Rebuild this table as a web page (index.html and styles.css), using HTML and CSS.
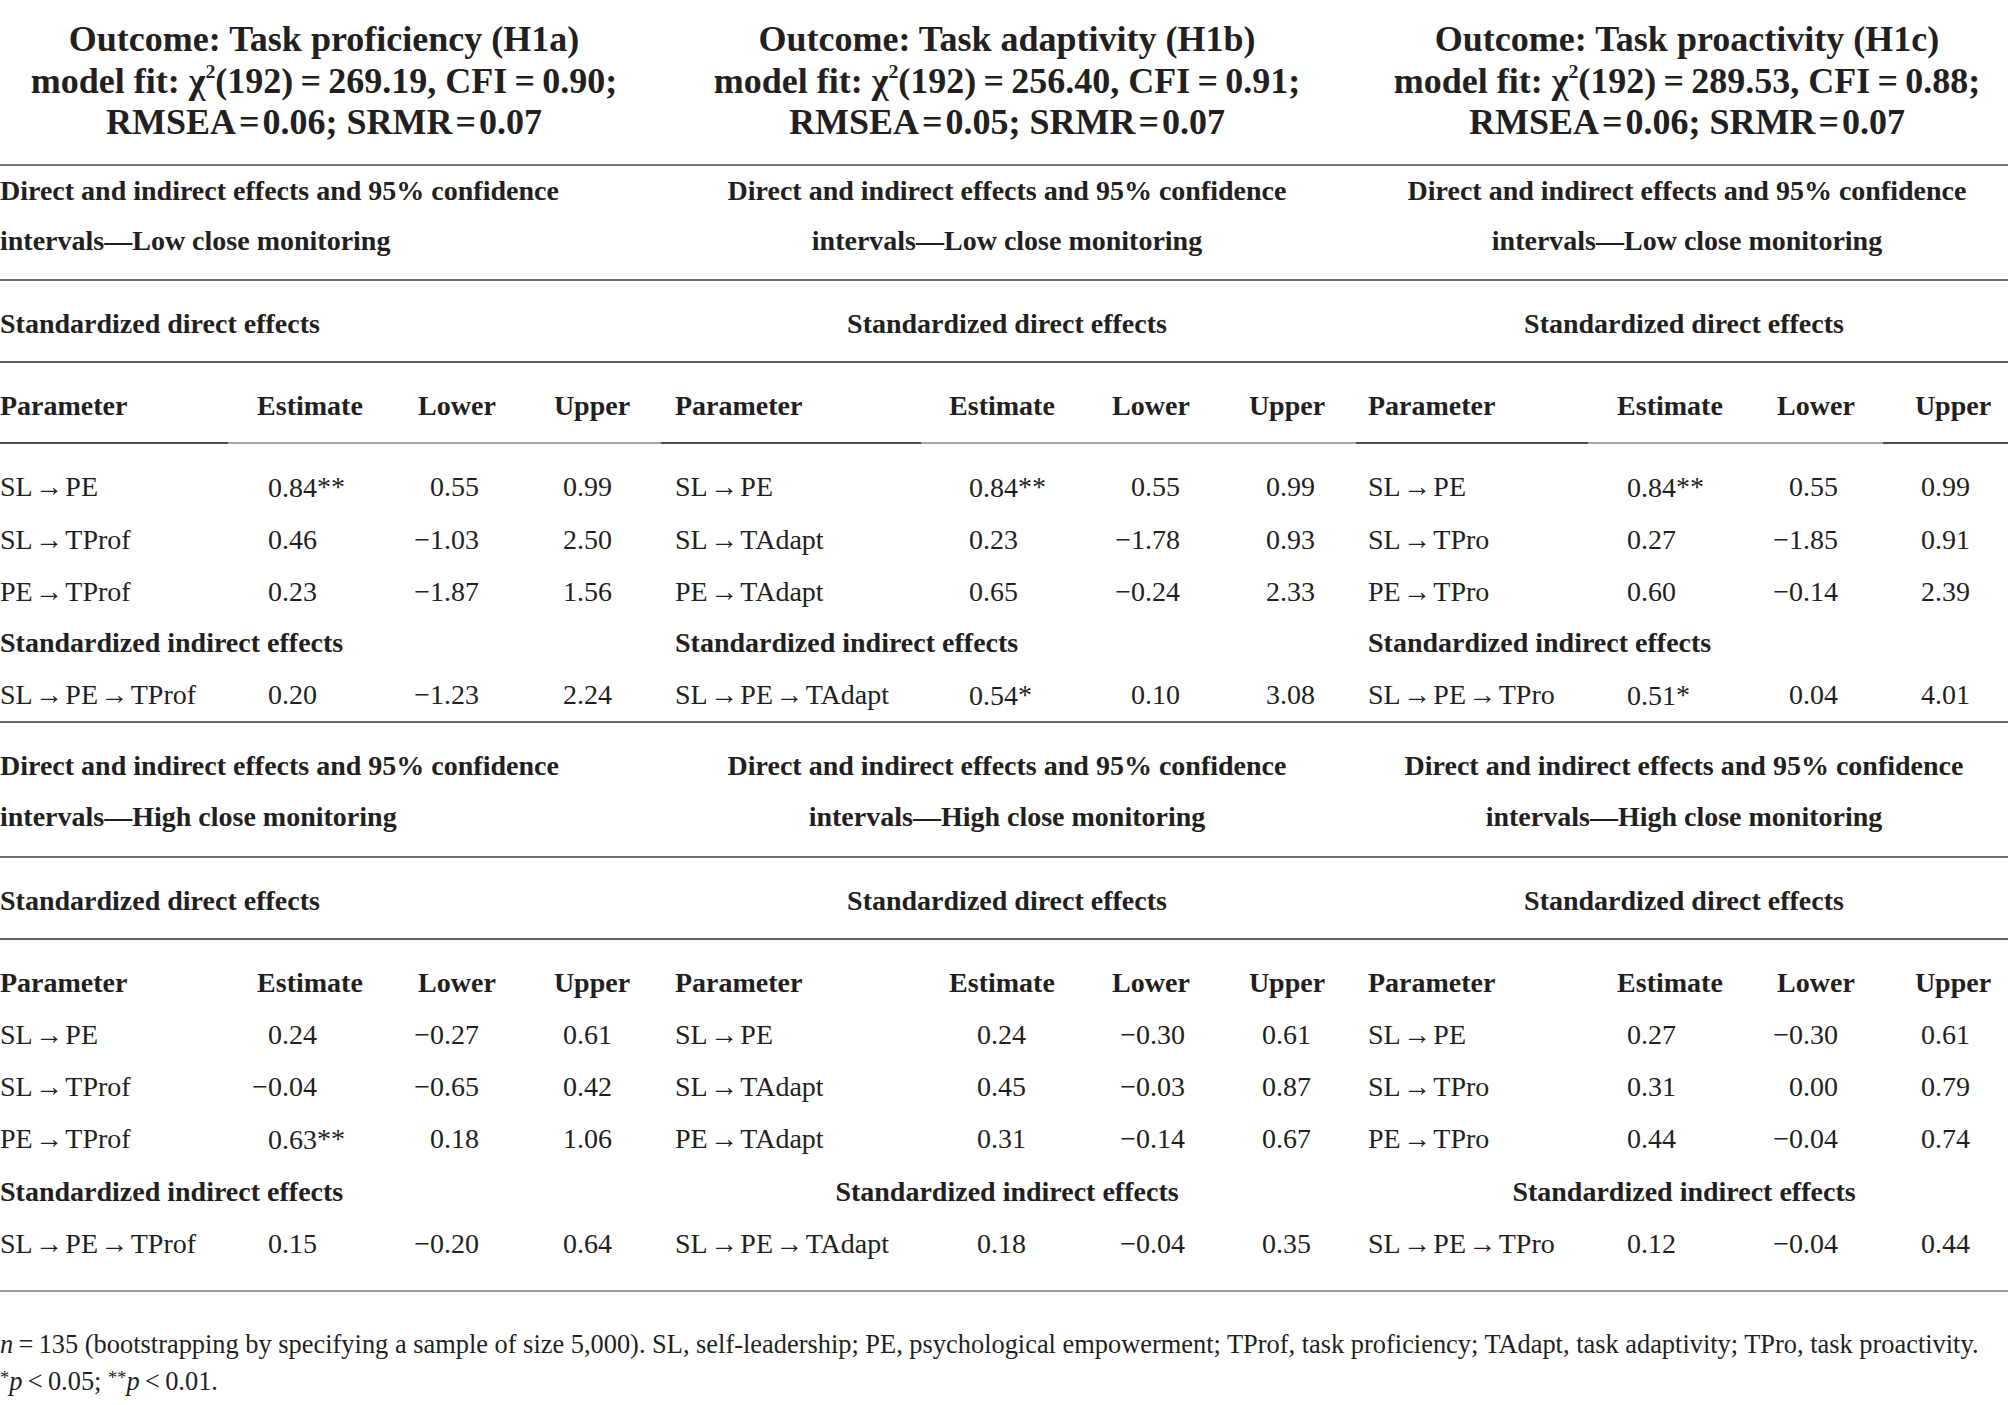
FILE: index.html
```html
<!DOCTYPE html>
<html lang="en">
<head>
<meta charset="utf-8">
<title>Direct and indirect effects</title>
<link rel="stylesheet" href="styles.css">
</head>
<body>
<div class="tbl">
  <div class="r title">
    <div class="g">Outcome: Task proficiency (H1a)<br>model fit: χ<span class="sup">2</span>(192)&#8201;=&#8201;269.19, CFI&#8201;=&#8201;0.90;<br>RMSEA&#8202;=&#8202;0.06; SRMR&#8202;=&#8202;0.07</div>
    <div class="g">Outcome: Task adaptivity (H1b)<br>model fit: χ<span class="sup">2</span>(192)&#8201;=&#8201;256.40, CFI&#8201;=&#8201;0.91;<br>RMSEA&#8202;=&#8202;0.05; SRMR&#8202;=&#8202;0.07</div>
    <div class="g">Outcome: Task proactivity (H1c)<br>model fit: χ<span class="sup">2</span>(192)&#8201;=&#8201;289.53, CFI&#8201;=&#8201;0.88;<br>RMSEA&#8202;=&#8202;0.06; SRMR&#8202;=&#8202;0.07</div>
  </div>

  <section class="half up">
    <div class="r sec">
      <div class="g left">Direct and indirect effects and 95% confidence<br>intervals—Low close monitoring</div>
      <div class="g">Direct and indirect effects and 95% confidence<br>intervals—Low close monitoring</div>
      <div class="g">Direct and indirect effects and 95% confidence<br>intervals—Low close monitoring</div>
    </div>
    <div class="r sub">
      <div class="g left">Standardized direct effects</div>
      <div class="g">Standardized direct effects</div>
      <div class="g g3">Standardized direct effects</div>
    </div>
    <div class="r hd">
      <div>Parameter</div><div>Estimate</div><div>Lower</div><div>Upper</div>
      <div>Parameter</div><div>Estimate</div><div>Lower</div><div>Upper</div>
      <div>Parameter</div><div>Estimate</div><div>Lower</div><div>Upper</div>
    </div>
    <div class="rows">
      <div class="r dr">
        <div>SL&#8202;→&#8202;PE</div><div>0.84<span class="st">**</span></div><div>0.55</div><div>0.99</div>
        <div>SL&#8202;→&#8202;PE</div><div>0.84<span class="st">**</span></div><div>0.55</div><div>0.99</div>
        <div>SL&#8202;→&#8202;PE</div><div>0.84<span class="st">**</span></div><div>0.55</div><div>0.99</div>
      </div>
      <div class="r dr">
        <div>SL&#8202;→&#8202;TProf</div><div>0.46</div><div>−1.03</div><div>2.50</div>
        <div>SL&#8202;→&#8202;TAdapt</div><div>0.23</div><div>−1.78</div><div>0.93</div>
        <div>SL&#8202;→&#8202;TPro</div><div>0.27</div><div>−1.85</div><div>0.91</div>
      </div>
      <div class="r dr">
        <div>PE&#8202;→&#8202;TProf</div><div>0.23</div><div>−1.87</div><div>1.56</div>
        <div>PE&#8202;→&#8202;TAdapt</div><div>0.65</div><div>−0.24</div><div>2.33</div>
        <div>PE&#8202;→&#8202;TPro</div><div>0.60</div><div>−0.14</div><div>2.39</div>
      </div>
      <div class="r ir">
        <div class="g left">Standardized indirect effects</div>
        <div class="g left g2">Standardized indirect effects</div>
        <div class="g left g3">Standardized indirect effects</div>
      </div>
      <div class="r dr">
        <div>SL&#8202;→&#8202;PE&#8202;→&#8202;TProf</div><div>0.20</div><div>−1.23</div><div>2.24</div>
        <div>SL&#8202;→&#8202;PE&#8202;→&#8202;TAdapt</div><div>0.54<span class="st">*</span></div><div>0.10</div><div>3.08</div>
        <div>SL&#8202;→&#8202;PE&#8202;→&#8202;TPro</div><div>0.51<span class="st">*</span></div><div>0.04</div><div>4.01</div>
      </div>
    </div>
  </section>

  <section class="half lo">
    <div class="r sec">
      <div class="g left">Direct and indirect effects and 95% confidence<br>intervals—High close monitoring</div>
      <div class="g">Direct and indirect effects and 95% confidence<br>intervals—High close monitoring</div>
      <div class="g g3">Direct and indirect effects and 95% confidence<br>intervals—High close monitoring</div>
    </div>
    <div class="r sub">
      <div class="g left">Standardized direct effects</div>
      <div class="g">Standardized direct effects</div>
      <div class="g g3">Standardized direct effects</div>
    </div>
    <div class="rows">
      <div class="r hd">
        <div>Parameter</div><div>Estimate</div><div>Lower</div><div>Upper</div>
        <div>Parameter</div><div>Estimate</div><div>Lower</div><div>Upper</div>
        <div>Parameter</div><div>Estimate</div><div>Lower</div><div>Upper</div>
      </div>
      <div class="r dr">
        <div>SL&#8202;→&#8202;PE</div><div>0.24</div><div>−0.27</div><div>0.61</div>
        <div>SL&#8202;→&#8202;PE</div><div>0.24</div><div>−0.30</div><div>0.61</div>
        <div>SL&#8202;→&#8202;PE</div><div>0.27</div><div>−0.30</div><div>0.61</div>
      </div>
      <div class="r dr">
        <div>SL&#8202;→&#8202;TProf</div><div>−0.04</div><div>−0.65</div><div>0.42</div>
        <div>SL&#8202;→&#8202;TAdapt</div><div>0.45</div><div>−0.03</div><div>0.87</div>
        <div>SL&#8202;→&#8202;TPro</div><div>0.31</div><div>0.00</div><div>0.79</div>
      </div>
      <div class="r dr">
        <div>PE&#8202;→&#8202;TProf</div><div>0.63<span class="st">**</span></div><div>0.18</div><div>1.06</div>
        <div>PE&#8202;→&#8202;TAdapt</div><div>0.31</div><div>−0.14</div><div>0.67</div>
        <div>PE&#8202;→&#8202;TPro</div><div>0.44</div><div>−0.04</div><div>0.74</div>
      </div>
      <div class="r ir">
        <div class="g left">Standardized indirect effects</div>
        <div class="g">Standardized indirect effects</div>
        <div class="g g3">Standardized indirect effects</div>
      </div>
      <div class="r dr">
        <div>SL&#8202;→&#8202;PE&#8202;→&#8202;TProf</div><div>0.15</div><div>−0.20</div><div>0.64</div>
        <div>SL&#8202;→&#8202;PE&#8202;→&#8202;TAdapt</div><div>0.18</div><div>−0.04</div><div>0.35</div>
        <div>SL&#8202;→&#8202;PE&#8202;→&#8202;TPro</div><div>0.12</div><div>−0.04</div><div>0.44</div>
      </div>
    </div>
  </section>

  <div class="note">
    <p><i>n</i>&#8201;=&#8201;135 (bootstrapping by specifying a sample of size 5,000). SL, self-leadership; PE, psychological empowerment; TProf, task proficiency; TAdapt, task adaptivity; TPro, task proactivity.</p>
    <p><span class="nsup">*</span><i>p</i>&#8201;&lt;&#8201;0.05; <span class="nsup">**</span><i>p</i>&#8201;&lt;&#8201;0.01.</p>
  </div>
</div>
</body>
</html>
```

FILE: styles.css
```css
html, body {
  margin: 0;
  padding: 0;
  background: #ffffff;
}

body {
  width: 2008px;
  color: #231f20;
  font-family: "Liberation Serif", "Times New Roman", serif;
  font-size: 28px;
}

.tbl {
  width: 2008px;
}

.r {
  display: grid;
  grid-template-columns: 250px 120px 174px 104px 252px 204px 94px 168px 194px 210px 92px 146px;
  white-space: nowrap;
}

.g {
  grid-column: span 4;
  text-align: center;
}

.g.left {
  text-align: left;
}

.g.g2.left {
  padding-left: 27px;
}

.g.g3.left {
  padding-left: 2px;
}

.g.g3 {
  padding-right: 6px;
}

/* title block */
.title {
  font-weight: 700;
  font-size: 36px;
  line-height: 41.5px;
  padding: 19px 0 20.5px;
  border-bottom: 2px solid #757575;
}

/* section labels */
.sec {
  font-weight: 700;
  border-bottom: 2px solid #6f6f6f;
}

.up .sec {
  line-height: 50px;
  padding-bottom: 13px;
}

.lo .sec {
  line-height: 51px;
  padding: 17px 0 14px;
}

.sub {
  font-weight: 700;
  line-height: 70px;
  padding: 7.5px 0 2.5px;
  border-bottom: 2px solid #5f5f5f;
}

/* column headers */
.hd {
  font-weight: 700;
  text-align: center;
}

.hd > :nth-child(4n + 1) {
  text-align: left;
}

.hd > :nth-child(4) { padding-right: 8px; }
.hd > :nth-child(5) { padding-left: 27px; }
.hd > :nth-child(8) { padding-left: 10px; }
.hd > :nth-child(9) { padding-left: 2px; }
.hd > :nth-child(10) { padding-left: 10px; }
.hd > :nth-child(12) { padding-left: 36px; }

.up .hd {
  line-height: 51.6px;
  padding: 17px 0 12.4px;
  background: linear-gradient(to right,
      #4d4d4d 0 228px, #a8a8a8 228px 661px,
      #4d4d4d 661px 921px, #a8a8a8 921px 1356px,
      #4d4d4d 1356px 1588px, #a8a8a8 1588px 1883px,
      #4d4d4d 1883px 2008px) left bottom / 100% 2px no-repeat;
}

.lo .hd {
  line-height: 52px;
  padding-top: 16.5px;
}

/* data rows */
.up .rows {
  padding-top: 17.5px;
  border-bottom: 2px solid #6a6a6a;
}

.up .rows .r {
  line-height: 51.6px;
}

.lo .rows {
  padding-bottom: 20px;
  border-bottom: 2px solid #9a9a9a;
}

.lo .rows .r {
  line-height: 52px;
}

.ir {
  font-weight: 700;
}

.dr > div {
  text-align: right;
}

.dr > :nth-child(4n + 1) {
  text-align: left;
}

.dr > :nth-child(5) { padding-left: 27px; }
.dr > :nth-child(9) { padding-left: 2px; }

.dr > :nth-child(2) { padding-right: 53px; }
.dr > :nth-child(3) { padding-right: 65px; }
.dr > :nth-child(4) { padding-right: 36px; }
.dr > :nth-child(10) { padding-right: 94px; }
.dr > :nth-child(11) { padding-right: 24px; }
.dr > :nth-child(12) { padding-right: 38px; }

.up .dr > :nth-child(6) { padding-right: 86px; }
.up .dr > :nth-child(7) { padding-right: 18px; }
.up .dr > :nth-child(8) { padding-right: 51px; }

.lo .dr > :nth-child(6) { padding-right: 78px; }
.lo .dr > :nth-child(7) { padding-right: 13px; }
.lo .dr > :nth-child(8) { padding-right: 55px; }

.st {
  display: inline-block;
  width: 0;
  text-align: left;
  vertical-align: 1px;
}

.sup {
  font-size: 0.55em;
  line-height: 0;
  vertical-align: 0.75em;
}

/* footnote */
.note {
  padding-top: 33.6px;
  font-size: 26.4px;
  line-height: 37px;
  white-space: nowrap;
}

.note p {
  margin: 0;
}

.nsup {
  font-size: 0.7em;
  line-height: 0;
  vertical-align: 0.35em;
}
```
